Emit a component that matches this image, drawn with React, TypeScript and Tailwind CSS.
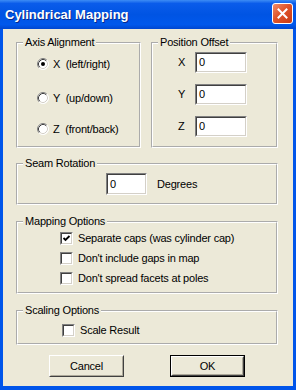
import React from "react";

const ui = "font-['Liberation_Sans',Arial,sans-serif] text-[11px] tracking-[-0.2px] text-black";

function Radio({ checked }: { checked?: boolean }) {
  return (
    <svg width="12" height="12" viewBox="0 0 12 12" className="shrink-0">
      <circle cx="6" cy="6" r="5.5" fill="#ffffff" />
      <path d="M2.11 9.89 A5.5 5.5 0 0 1 9.89 2.11" fill="none" stroke="#808080" />
      <path d="M9.89 2.11 A5.5 5.5 0 0 1 2.11 9.89" fill="none" stroke="#ffffff" />
      <path d="M2.82 9.18 A4.5 4.5 0 0 1 9.18 2.82" fill="none" stroke="#404040" />
      <path d="M9.18 2.82 A4.5 4.5 0 0 1 2.82 9.18" fill="none" stroke="#D4D0C8" />
      {checked && <circle cx="6" cy="6" r="2" fill="#000000" />}
    </svg>
  );
}

function Checkbox({ checked }: { checked?: boolean }) {
  return (
    <div className="w-[13px] h-[13px] shrink-0 border border-t-[#808080] border-l-[#808080] border-b-white border-r-white">
      <div className="w-full h-full bg-white border border-t-[#404040] border-l-[#404040] border-b-[#D4D0C8] border-r-[#D4D0C8]">
        {checked && (
          <svg width="9" height="9" viewBox="0 0 9 9">
            <path d="M1.5 4 L3.5 6 L7.5 2" fill="none" stroke="#000" strokeWidth="1.8" />
          </svg>
        )}
      </div>
    </div>
  );
}

function TextBox({ value, className }: { value: string; className: string }) {
  return (
    <div className={"shrink-0 border border-t-[#808080] border-l-[#808080] border-b-white border-r-white " + className}>
      <div className="w-full h-full bg-white border border-t-[#404040] border-l-[#404040] border-b-[#D4D0C8] border-r-[#D4D0C8] pl-[2px] flex items-center">
        {value}
      </div>
    </div>
  );
}

function Group({
  title,
  className,
  children,
}: {
  title: string;
  className: string;
  children: React.ReactNode;
}) {
  return (
    <fieldset className={"border-2 border-white [border-style:groove] " + className}>
      <legend className="ml-[5px] px-[2px] leading-[13px]">{title}</legend>
      {children}
    </fieldset>
  );
}

function Button({ label, isDefault }: { label: string; isDefault?: boolean }) {
  return (
    <div className={"w-[75px] h-[22px] " + (isDefault ? "border border-black" : "")}>
      <div className="w-full h-full border border-t-white border-l-white border-b-[#404040] border-r-[#404040]">
        <div className="w-full h-full border border-t-[#ECE9D8] border-l-[#ECE9D8] border-b-[#ACA899] border-r-[#ACA899] flex items-center justify-center">
          {label}
        </div>
      </div>
    </div>
  );
}

export default function App() {
  const axes = [
    { label: "X  (left/right)", checked: true },
    { label: "Y  (up/down)" },
    { label: "Z  (front/back)" },
  ];

  return (
    <div className={"w-[296px] h-[390px] bg-[#0055EA] flex flex-col " + ui}>
      {/* title bar */}
      <div className="h-[29px] shrink-0 flex items-start bg-[linear-gradient(to_bottom,#3D8CF5_0%,#0A5CEA_12%,#0054E3_50%,#0058EC_85%,#0046CF_100%)]">
        <div className="flex-1 pl-[5px] h-full flex items-center text-white font-bold text-[13px] tracking-normal [text-shadow:1px_1px_#0A2A8A]">
          Cylindrical Mapping
        </div>
        <div className="mt-[3px] mr-[3px] w-[21px] h-[21px] rounded-[3px] border border-white bg-[linear-gradient(135deg,#F08C6A_0%,#E0542A_45%,#C83A14_100%)] flex items-center justify-center">
          <svg width="11" height="11" viewBox="0 0 11 11">
            <path d="M1.5 1.5 L9.5 9.5 M9.5 1.5 L1.5 9.5" stroke="#ffffff" strokeWidth="2" strokeLinecap="square" />
          </svg>
        </div>
      </div>

      {/* dialog body */}
      <div className="flex-1 mx-[3px] mb-[4px] bg-[#ECE9D8] pl-[13px] pr-[15px] pt-[7px] flex flex-col">
        <div className="flex gap-[10px]">
          <Group title="Axis Alignment" className="w-[125px] h-[112px]">
            <div className="flex flex-col pl-[19px] pt-[7px]">
              {axes.map((a, idx) => (
                <div
                  key={idx}
                  className={
                    "h-[16px] flex items-center gap-[4px] whitespace-pre " +
                    (idx === 1 ? "mt-[18px]" : idx === 2 ? "mt-[15px]" : "")
                  }
                >
                  <Radio checked={a.checked} />
                  <span>{a.label}</span>
                </div>
              ))}
            </div>
          </Group>
          <Group title="Position Offset" className="w-[127px] h-[112px]">
            <div className="flex flex-col gap-[11px] pl-[25px] pt-[3px]">
              {["X", "Y", "Z"].map((l) => (
                <div key={l} className="flex items-center">
                  <span className="w-[17px]">{l}</span>
                  <TextBox value="0" className="w-[52px] h-[21px]" />
                </div>
              ))}
            </div>
          </Group>
        </div>

        <Group title="Seam Rotation" className="mt-[9px] h-[48px]">
          <div className="flex items-center pl-[88px] pt-[3px] gap-[10px]">
            <TextBox value="0" className="w-[41px] h-[22px]" />
            <span>Degrees</span>
          </div>
        </Group>

        <Group title="Mapping Options" className="mt-[10px] h-[79px]">
          <div className="flex flex-col gap-[7px] pl-[42px] pt-[4px]">
            {[
              { label: "Separate caps (was cylinder cap)", checked: true },
              { label: "Don't include gaps in map" },
              { label: "Don't spread facets at poles" },
            ].map((c) => (
              <div key={c.label} className="h-[13px] flex items-center gap-[5px]">
                <Checkbox checked={c.checked} />
                <span>{c.label}</span>
              </div>
            ))}
          </div>
        </Group>

        <Group title="Scaling Options" className="mt-[10px] h-[41px]">
          <div className="flex items-center gap-[5px] pl-[44px] pt-[5px]">
            <Checkbox />
            <span>Scale Result</span>
          </div>
        </Group>

        <div className="mt-[10px] flex justify-center gap-[46px]">
          <Button label="Cancel" />
          <Button label="OK" isDefault />
        </div>
      </div>
    </div>
  );
}
